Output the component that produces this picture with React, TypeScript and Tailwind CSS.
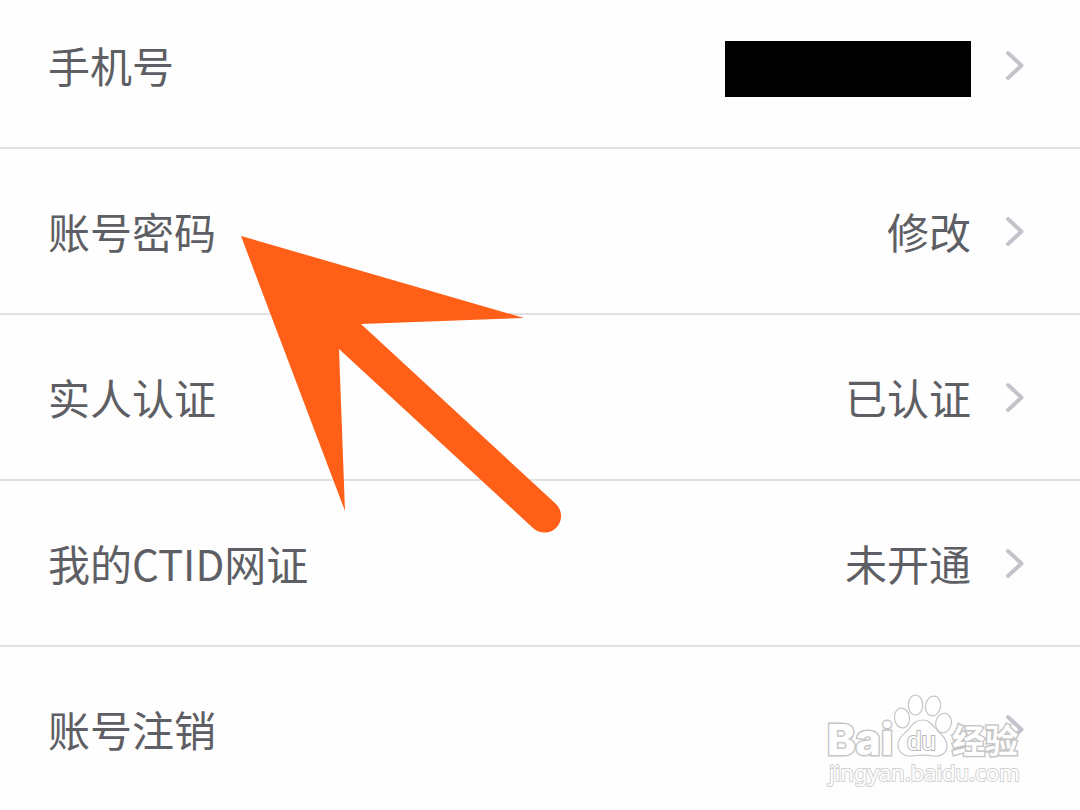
import { clsx } from "clsx";

type Setting = {
  label: string;
  value?: string;
  masked?: boolean;
};

const settings: Setting[] = [
  { label: "手机号", masked: true },
  { label: "账号密码", value: "修改" },
  { label: "实人认证", value: "已认证" },
  { label: "我的CTID网证", value: "未开通" },
  { label: "账号注销" },
];

function Chevron() {
  return (
    <svg
      width="20"
      height="32"
      viewBox="0 0 20 32"
      fill="none"
      stroke="#c3c3cb"
      strokeWidth="4"
      strokeLinecap="round"
      strokeLinejoin="round"
      aria-hidden="true"
    >
      <path d="M3 4 L16.5 16.500 L3 29" />
    </svg>
  );
}

function SettingRow({ label, value, masked }: Setting) {
  return (
    <li className="group border-b-2 border-[#e1e1e2] last:border-b-0">
      <button
        type="button"
        className="flex w-full items-center justify-between pt-[50px] pr-[55px] pb-[50px] pl-12 text-left group-first:pt-[33px] group-last:pb-12"
      >
        <span>{label}</span>
        <span className="flex items-center gap-[34px]">
          {masked && <span className="mt-2 h-14 w-[246px] bg-black" />}
          {value && <span>{value}</span>}
          <Chevron />
        </span>
      </button>
    </li>
  );
}

// Points at the password row
function Arrow({ className }: { className?: string }) {
  return (
    <svg
      width="322"
      height="300"
      viewBox="0 0 322 300"
      fill="#ff5f17"
      className={clsx("pointer-events-none", className)}
      aria-hidden="true"
    >
      <path d="M1 1 L284 83 L121 89 L316 269 A16.5 16.5 0 0 1 293 293 L99 114 L105 276 Z" />
    </svg>
  );
}

function Watermark({ className }: { className?: string }) {
  return (
    <svg
      width="204"
      height="100"
      viewBox="0 0 204 100"
      fill="#ffffff"
      stroke="#c6c6c6"
      strokeWidth="1.2"
      className={clsx("pointer-events-none", className)}
      role="img"
      aria-label="Baidu 经验"
    >
      <text x="7" y="65" fontSize="43" fontWeight="800" fontFamily="Inter, sans-serif" strokeWidth="3" paintOrder="stroke">
        Bai
      </text>
      <ellipse cx="82" cy="28" rx="7.5" ry="10" transform="rotate(-8 82 28)" />
      <ellipse cx="95.500" cy="15" rx="7.2" ry="10" />
      <ellipse cx="113" cy="16" rx="7.5" ry="10" transform="rotate(10 113 16)" />
      <ellipse cx="123.500" cy="33" rx="7.800" ry="9.800" transform="rotate(12 123.500 33)" />
      <path d="M103 30 C110 30 113 36 118 41 C123 46 127 50 127 56 C127 63 121 67 114 66 C107 65 99 65 92 66 C84 67 78 62 78 55 C78 48 83 45 88 40 C92 35 95 30 103 30 Z" />
      <text x="87" y="60" fontSize="26" fontWeight="400" fontFamily="'Liberation Sans', sans-serif" stroke="#b8b8b8" strokeWidth="2" paintOrder="stroke">
        du
      </text>
      <text x="132" y="63" fontSize="33" fontWeight="700" fontFamily="'Noto Sans CJK SC', sans-serif" strokeWidth="3" paintOrder="stroke">
        经验
      </text>
      <text x="9" y="91" fontSize="22" fontFamily="'Noto Sans', sans-serif" stroke="#d2d2d2" strokeWidth="2" paintOrder="stroke">
        jingyan.baidu.com
      </text>
    </svg>
  );
}

export default function App() {
  return (
    <main className="relative min-h-screen overflow-hidden bg-[#fefefe] font-[family-name:'Noto_Sans_CJK_SC',sans-serif] text-[42px] leading-[64px] text-[#5e5f64]">
      <ul>
        {settings.map((item) => (
          <SettingRow key={item.label} {...item} />
        ))}
      </ul>
      <Arrow className="absolute top-[235px] left-[240px]" />
      <Watermark className="absolute top-[690px] right-[56px]" />
    </main>
  );
}
